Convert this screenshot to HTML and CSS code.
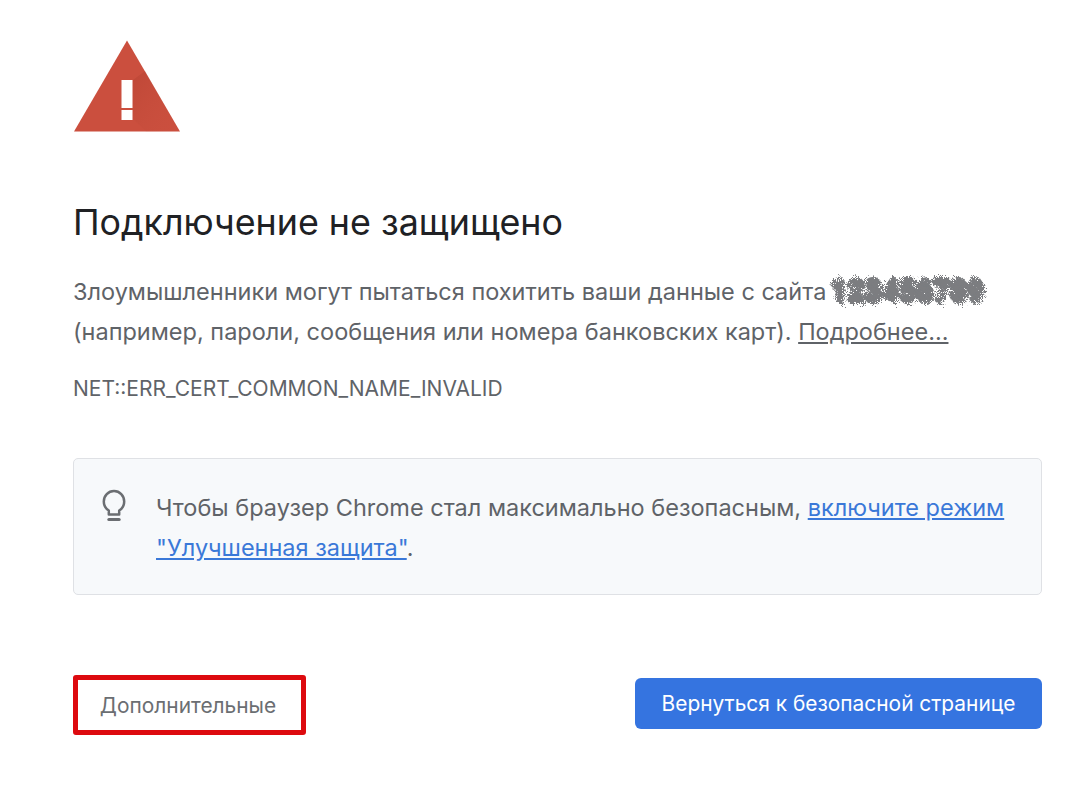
FILE: index.html
```html
<!DOCTYPE html>
<html lang="ru">
<head>
<meta charset="utf-8">
<title>Подключение не защищено</title>
<link rel="stylesheet" href="styles.css">
</head>
<body>
<svg class="defs" width="0" height="0" aria-hidden="true">
  <filter id="pixelate" x="-5%" y="-40%" width="110%" height="180%">
    <feTurbulence type="fractalNoise" baseFrequency="0.95" numOctaves="2" seed="4" result="n"/>
    <feDisplacementMap in="SourceGraphic" in2="n" scale="13"/>
  </filter>
</svg>
<main class="page">
  <svg class="warn" width="106" height="92" viewBox="0 0 106 92" aria-hidden="true">
    <defs>
      <linearGradient id="shade" x1="0" y1="0" x2="1" y2="1">
        <stop offset="0" stop-color="#a8392a" stop-opacity=".35"/>
        <stop offset="1" stop-color="#c5523f" stop-opacity="0"/>
      </linearGradient>
    </defs>
    <path d="M53 0.500 L106 91.500 H0 Z" fill="#cb4f3e"/>
    <path d="M59 40 L59 79 L72 91.500 H106 L71 31 Z" fill="url(#shade)"/>
    <rect x="47.500" y="40" width="11" height="28" fill="#fff"/>
    <rect x="47.500" y="70" width="11" height="10" fill="#fff"/>
  </svg>
  <h1 class="title">Подключение не защищено</h1>
  <p class="lead">Злоумышленники могут пытаться похитить ваши данные с сайта<span class="masked">123456789</span><br>(например, пароли, сообщения или номера банковских карт). <a class="more" href="#">Подробнее...</a></p>
  <p class="code">NET::ERR_CERT_COMMON_NAME_INVALID</p>
  <section class="tip">
    <svg class="bulb" width="24" height="34" viewBox="0 0 24 34" aria-hidden="true">
      <path d="M6.800 21.500 C3.600 19.500 1.800 16.300 1.800 12.500 C1.800 6.600 6.300 2 12 2 C17.700 2 22.200 6.600 22.200 12.500 C22.200 16.300 20.400 19.500 17.200 21.500 L17.200 25.500 L6.800 25.500 Z" fill="none" stroke="#6b6e72" stroke-width="2.500" stroke-linejoin="round"/>
      <path d="M6.800 30.500 H17.200" stroke="#6b6e72" stroke-width="3" stroke-linecap="round"/>
    </svg>
    <p class="tip-text">Чтобы браузер Chrome стал максимально безопасным, <a class="link" href="#">включите режим</a><br><a class="link" href="#">"Улучшенная защита"</a>.</p>
  </section>
  <div class="actions">
    <button class="btn btn-secondary" type="button">Дополнительные</button>
    <button class="btn btn-primary" type="button">Вернуться к безопасной странице</button>
  </div>
</main>
</body>
</html>
```

FILE: styles.css
```css
* { box-sizing: border-box; }
html, body { margin: 0; background: #fff; }
body { width: 1068px; height: 790px; overflow: hidden; font-family: Inter, Roboto, "Liberation Sans", sans-serif; color: #5f6368; }
.defs { position: absolute; }
.page { padding: 40px 26px 0 73px; display: flex; flex-direction: column; }
.warn { display: block; margin-left: 1px; }
.title { margin: 66px 0 0; font-size: 35.800px; line-height: 48px; font-weight: 400; color: #202124; }
.lead { margin: 26px 0 0; font-size: 23.500px; line-height: 40px; white-space: nowrap; }
.more { color: #5f6368; text-decoration: underline; }
.masked { display: inline-block; vertical-align: -1px; color: #7b7d80; filter: url(#pixelate) blur(.3px); font-family: Roboto, sans-serif; font-weight: 900; font-size: 30px; line-height: 24px; margin-left: 4px; letter-spacing: -.3px; text-shadow: 2px 0 0 #7b7d80, -2px 0 0 #7b7d80, 0 3px 0 #7b7d80, 0 -3px 0 #7b7d80; }
.code { margin: 23px 0 0; font-size: 21px; line-height: 28px; }
.tip { margin-top: 55px; height: 137px; border: 1px solid #dfe1e5; border-radius: 5px; background: #f7f9fb; display: flex; align-items: flex-start; padding: 29px 30px 0 28px; gap: 30px; }
.bulb { flex: none; margin-top: 1px; }
.tip-text { margin: 0; font-size: 23.500px; line-height: 40px; white-space: nowrap; }
.link { color: #3a78d8; text-decoration: underline; }
.actions { margin-top: 80px; display: flex; justify-content: space-between; align-items: flex-start; }
.btn { font-family: Inter, Roboto, sans-serif; font-size: 20.900px; line-height: 24px; cursor: pointer; padding: 1px 0 0; }
.btn-secondary { width: 233px; height: 60px; background: #fff; color: #6b6e72; border: 5px solid #dd0a0f; border-radius: 3px; padding-right: 3px; }
.btn-primary { width: 407px; height: 51px; background: #3574e0; color: #fff; border: 0; border-radius: 6px; margin-top: 3px; }
```
